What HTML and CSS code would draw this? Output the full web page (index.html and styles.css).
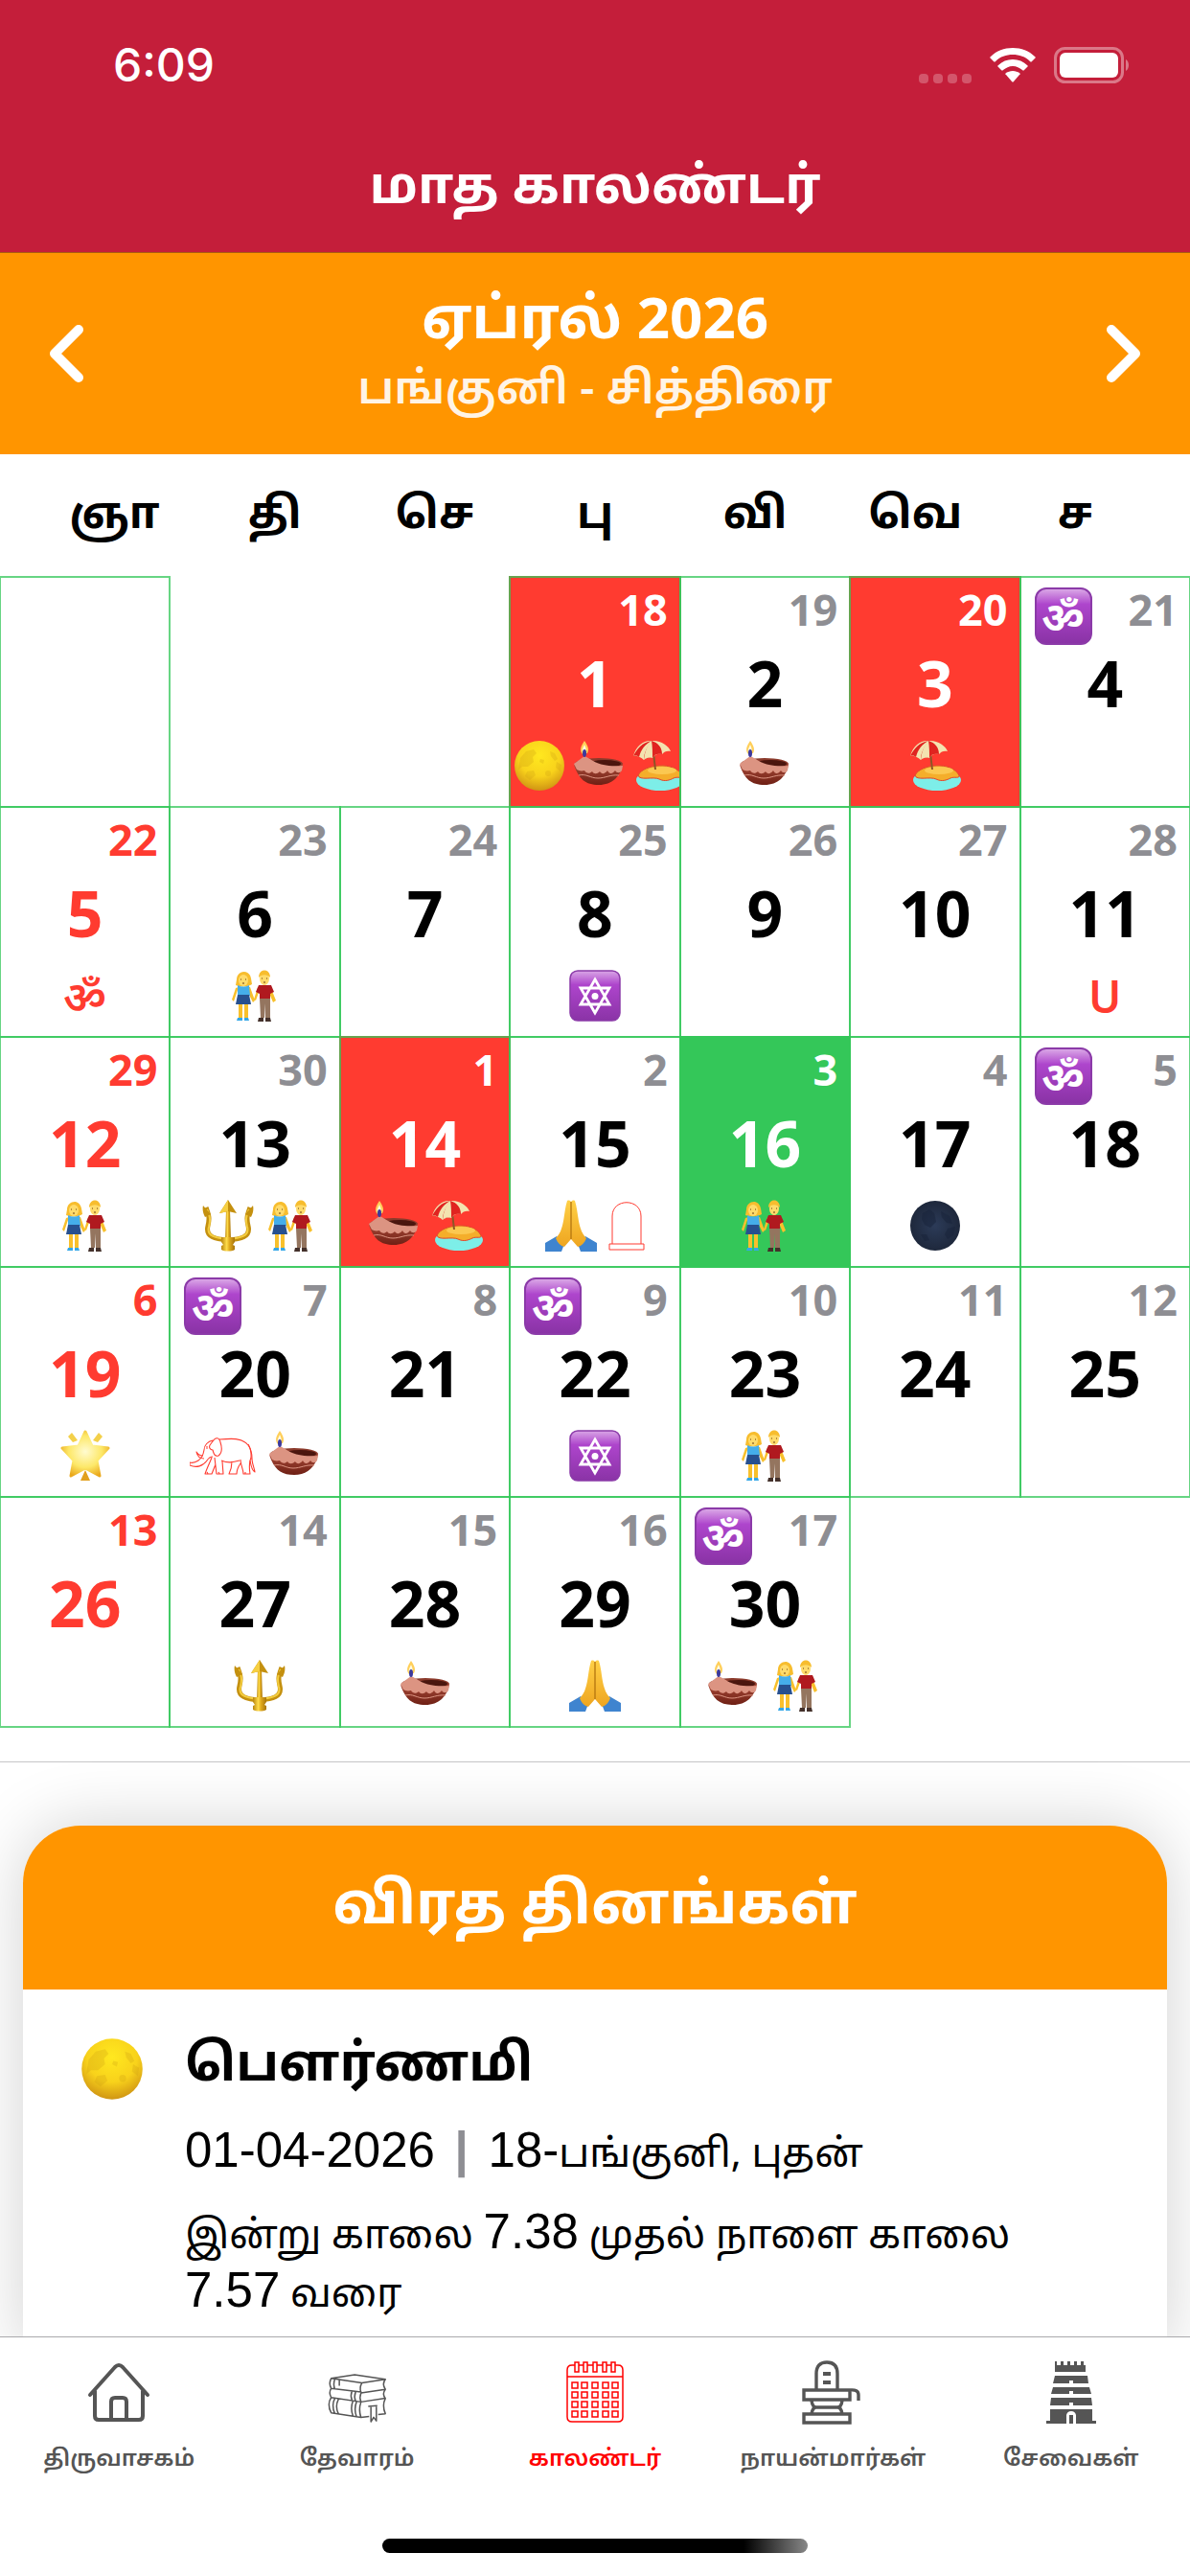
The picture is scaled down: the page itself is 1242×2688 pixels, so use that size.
FILE: index.html
```html
<!DOCTYPE html>
<html lang="ta">
	<head>
		<title>மாத காலண்டர்</title>
		<meta charset="UTF-8">
		<meta content="width=device-width,initial-scale=1.0" name="viewport">
		<link rel="stylesheet" href="styles.css">
	</head>
	<body>
		<svg class="sprite" aria-hidden="true">
			<defs>
				<radialGradient id="gMoon" cx=".5" cy=".3" r=".75">
					<stop offset="0" stop-color="#ffe81f"/><stop offset=".55" stop-color="#f8d21b"/><stop offset="1" stop-color="#c98a12"/>
				</radialGradient>
				<radialGradient id="gDark" cx=".5" cy=".5" r=".6">
					<stop offset="0" stop-color="#2c3b58"/><stop offset="1" stop-color="#1b2436"/>
				</radialGradient>
				<linearGradient id="gPurple" x1="0" y1="0" x2="0" y2="1">
					<stop offset="0" stop-color="#d9a6e6"/><stop offset=".28" stop-color="#ae45cc"/><stop offset="1" stop-color="#8a33a6"/>
				</linearGradient>
				<linearGradient id="gBowl" x1="0" y1="0" x2="0" y2="1">
					<stop offset="0" stop-color="#a84a38"/><stop offset="1" stop-color="#6e1f14"/>
				</linearGradient>
				<linearGradient id="gGold" x1="0" y1="0" x2="1" y2="0">
					<stop offset="0" stop-color="#b9850f"/><stop offset=".4" stop-color="#ffdc4a"/><stop offset=".6" stop-color="#e0aa1d"/><stop offset="1" stop-color="#a8740c"/>
				</linearGradient>
				<linearGradient id="gHand" x1="0" y1="0" x2="0" y2="1">
					<stop offset="0" stop-color="#ffd046"/><stop offset="1" stop-color="#eea520"/>
				</linearGradient>
				<radialGradient id="gStar" cx=".5" cy=".45" r=".6">
					<stop offset="0" stop-color="#fffbd0"/><stop offset=".6" stop-color="#fde868"/><stop offset="1" stop-color="#eaa81c"/>
				</radialGradient>
			</defs>
			<symbol id="moon" viewBox="0 0 54 54">
				<circle cx="27" cy="27" r="26" fill="url(#gMoon)"/>
				<g fill="#c99a12" opacity=".25">
					<path d="M7 19l6-7 8-2 3 4-4 4 1 5-6 5-6 0-4 3z"/>
					<path d="M38 12l5 2 3 6-3 2-4-5zM45 23l5 3-1 7-5-4z"/>
					<path d="M14 33l7-1 2 5-6 5-5-4zM28 20l4 1-1 4-4-2z"/>
					<circle cx="36" cy="35" r="3"/>
				</g>
			</symbol>
			<symbol id="newmoon" viewBox="0 0 54 54">
				<circle cx="27" cy="27" r="26" fill="url(#gDark)"/>
				<g fill="#18233a" opacity=".5">
					<path d="M14 14l7-4 5 4 2 9-6 6-6-3-3-6z"/>
					<path d="M33 12l9 5 3 8-6-1-5-6z"/>
					<path d="M40 30l8-2-2 9-6 4-3-5zM12 36l6 0 3 6-5 1z"/>
				</g>
			</symbol>
			<symbol id="lamp" viewBox="0 0 54 54">
				<ellipse cx="27" cy="25" rx="25" ry="6" fill="#8c3b2c"/>
				<ellipse cx="33" cy="25" rx="17" ry="4" fill="#4b160e"/>
				<path d="M1 26c5 15 12 21 26 21s23-9 25-22c-4 5-36 9-51 1z" fill="url(#gBowl)"/>
				<path d="M1 25l11-8c8 3 13 12 40 10l-1 5c-2 3-5 3-7 0-3 4-6 4-8 0-3 4-6 4-8 1-3 3-6 3-8 0-3 3-6 2-8-1-4 1-6 0-8-1z" fill="#dc9482"/>
				<path d="M6 37c8-2 12 3 20 3s13-4 22-3" fill="none" stroke="#dc9482" stroke-width="1"/>
				<path d="M12 1c4 6 5 9 3 13l-5 1c-4-5-1-9 2-14z" fill="#ffcf5a"/>
				<path d="M12 5c2 4 2 6 1 8h-3c-1-3 1-5 2-8z" fill="#fffbe0"/>
				<ellipse cx="12" cy="14" rx="2" ry="4" fill="#3d3a9c"/>
			</symbol>
			<symbol id="beach" viewBox="0 0 54 54">
				<ellipse cx="29" cy="42" rx="25" ry="11" fill="#7deee8"/>
				<path d="M6 37c6-12 38-15 46 0 1 4-5 1-9 3s-9 4-15 1-21 2-22-4z" fill="#f4ae2b" stroke="#e0462f" stroke-width="1"/>
				<ellipse cx="31" cy="32" rx="15" ry="4" fill="#fbc851"/>
				<path d="M21 5l3 26" stroke="#8d5626" stroke-width="2" fill="none"/>
				<path d="M1 17C4 5 13 0 20 1c9-1 18 5 20 11-3-1-7 0-9 3-4-1-8 0-10 4-4-1-7 0-9 2-3-3-8-5-11-4z" fill="#f3e3b0"/>
				<path d="M20 1C10 3 5 9 1 17c3-1 5 0 6 1C9 10 13 5 20 1zM20 1c-4 6-8 12-8 20 2-2 5-3 9-2 2-4 5-5 10-4C31 8 27 3 20 1z" fill="#e02420"/>
				<path d="M20 1c-5 5-7 12-8 20 2-2 5-3 9-2 0-6 0-12-1-18z" fill="#f3e3b0"/>
			</symbol>
			<symbol id="couple" viewBox="0 0 54 54">
				<path d="M17 18h5l5 14-2 2-5-10zM10 18l-5 15-2-2 4-12zM33 18l-5 14-2-1 4-13zM43 17l6 15-3 2-5-12z" fill="#f8c02c"/>
				<path d="M10 36h4v14h-4zM16 36h4v14h-4z" fill="#f8c02c"/>
				<path d="M8 10c0-9 13-12 15-1l1 6c-4 3-13 3-17 1z" fill="#f7bd2e"/>
				<ellipse cx="15" cy="11" rx="5" ry="6" fill="#ffdb6a"/>
				<path d="M9 16c4 2 8 2 12 0l1 11H9z" fill="#45aeea"/>
				<path d="M9 26h12l2 10H7z" fill="#27508f"/>
				<path d="M9 50h5v3H8zM16 50h4l1 3h-5z" fill="#35a7e8"/>
				<ellipse cx="37" cy="9" rx="5" ry="7" fill="#ffdb6a"/>
				<path d="M31 8c0-10 12-10 12 0-3-3-8-4-12 0z" fill="#f7bd2e"/>
				<path d="M31 16h13l3 7-4 2v5H32v-5l-4-2z" fill="#b0191f"/>
				<path d="M32 30h11v20h-5v-15l-1 15h-4z" fill="#94755f"/>
				<path d="M31 50h5v4h-6zM38 50h5l1 4h-6z" fill="#43302a"/>
				<path d="M12 10h1M17 10h1M34 9h1M39 9h1M14 14h2M36 13h2" stroke="#6b3c12" stroke-width="1.2"/>
			</symbol>
			<symbol id="trident" viewBox="0 0 54 54">
				<path d="M4 8c3 8 4 11 2 19-3 12 8 14 21 15 13-1 24-3 21-15-2-8-1-11 2-19" fill="none" stroke="#c4900f" stroke-width="5"/>
				<path d="M5 10c3 7 4 10 2 18-3 10 8 12 20 13 12-1 23-3 20-13-2-8-1-11 2-18" fill="none" stroke="#f4cd3e" stroke-width="2"/>
				<path d="M25 10h4l1 32h-6z" fill="url(#gGold)"/>
				<path d="M27 0l9 14-9-2-9 2zM1 6l8 9-6 3c-2-4-3-8-2-12zM53 6l-8 9 6 3c2-4 3-8 2-12z" fill="#c4900f"/>
				<path d="M27 0v12l-9 2z" fill="#f6cf42"/>
				<path d="M20 39h14v5l-2 3 2 1v4c-3 2-11 2-14 0v-4l2-1-2-3z" fill="url(#gGold)"/>
			</symbol>
			<symbol id="pray" viewBox="0 0 54 54">
				<path d="M0 45l12-7 8 8-3 8H0zM54 45l-12-7-8 8 3 8h17z" fill="#3f84cf"/>
				<path d="M23 1c2-1 3 0 4 1 1-1 2-2 4-1 3 9 3 21 6 29 1 4 4 8 6 10-2 5-5 8-9 9l-7-8-7 8c-4-1-7-4-9-9 2-2 5-6 6-10 3-8 3-20 6-29z" fill="url(#gHand)"/>
				<path d="M27 2v39" stroke="#b87a12" stroke-width="1.4"/>
			</symbol>
			<symbol id="star" viewBox="0 0 54 54">
				<path d="M27 2l7 15 17 2-12 13 3 16-15-8-15 8 3-16L3 19l17-2z" fill="url(#gStar)" stroke="url(#gStar)" stroke-width="3" stroke-linejoin="round"/>
				<path d="M13 3l6 8-5 2-5-6zM41 3l4 4-5 6-5-2z" fill="#f3d04a"/>
				<path d="M27 42l5 11H22z" fill="#e2a01d"/>
			</symbol>
			<symbol id="hexagram" viewBox="0 0 54 54">
				<rect x="1" y="1" width="52" height="52" rx="8" fill="url(#gPurple)" stroke="#8b3aa8" stroke-width="1.5"/>
				<path d="M27 10l15 26H12zM27 45L12 19h30z" fill="none" stroke="#fff" stroke-width="2.8"/>
				<circle cx="27" cy="27.500" r="3.500" fill="#fff"/>
			</symbol>
			<symbol id="lingam" viewBox="0 0 38 54">
				<path d="M4 46V17C4-2 34-2 34 17v29M1 46h36v6H1z" fill="none" stroke="#ff3b30" stroke-width="1"/>
			</symbol>
			<symbol id="elephant" viewBox="0 0 70 54">
				<g fill="none" stroke="#ff3b30" stroke-width="1.1" stroke-linejoin="round">
					<path d="M31 10c12-1 24-2 30 6 3 4 4 9 4 14 0 6 3 11 3 14-3-1-4-6-5-12"/>
					<path d="M24 12c3-5 7-4 8 1 2 6 2 11-2 14-4 1-5-2-6-6-3 0-4-3-3-5zM24 11c-5 1-9 5-9 10-1 6-3 9-6 11-3 2-6 3-9 2v3c7 3 14 1 18-5 2-3 4-4 6-4"/>
					<path d="M14 27c-3 0-6-2-7-4 1 5 4 7 8 7M23 29c-2 5-5 11-7 17h7l4-10M26 29l2 17h7l-1-13"/>
					<path d="M33 32c7 3 12 2 19 0M44 33c0 5-1 9-3 13h8c0-4 2-8 4-11M53 31c0 6 3 10 3 15h7c-1-6-1-12 1-17M61 15c4 6 3 11 3 16"/>
					<path d="M17 19h2M18 17v1M18 44l1 2M30 44l1 2M58 44v2"/>
				</g>
			</symbol>
		</svg>

		<header class="topbar">
			<div class="status">
				<span class="clock">6:09</span>
				<div class="status-icons">
					<span class="dots"><i></i><i></i><i></i><i></i></span>
					<svg class="wifi" viewBox="0 0 48 36">
						<g fill="#fff">
							<path d="M24 0c9 0 17 3 23 9 1 1 1 1 0 2l-3 3c-1 1-1 1-2 0C37 9 31 7 24 7S11 9 6 14c-1 1-1 1-2 0l-3-3c-1-1-1-1 0-2 6-6 14-9 23-9z"/>
							<path d="M24 12c6 0 11 2 15 6 1 1 1 1 0 2l-3 3c-1 1-1 1-2 0-3-2-6-4-10-4s-7 2-10 4c-1 1-1 1-2 0l-3-3c-1-1-1-1 0-2 4-4 9-6 15-6z"/>
							<path d="M24 24c3 0 5 1 7 2 1 1 1 2 0 2l-6 7c-1 1-1 1-2 0l-6-7c-1 0-1-1 0-2 2-1 4-2 7-2z"/>
						</g>
					</svg>
					<svg class="battery" viewBox="0 0 80 38">
						<rect x="1.5" y="1.5" width="70" height="35" rx="10" fill="none" stroke="#fff" stroke-opacity=".4" stroke-width="3"/>
						<rect x="6" y="6" width="61" height="26" rx="6" fill="#fff"/>
						<path d="M75 13c4 2 4 10 0 12z" fill="#fff" fill-opacity=".4"/>
					</svg>
				</div>
			</div>
			<h1>மாத காலண்டர்</h1>
		</header>

		<section class="month">
			<button type="button" aria-label="Previous month">
				<svg viewBox="0 0 36 60"><path d="M31 5L6 30l25 25"/></svg>
			</button>
			<div class="month-name">
				<h2>ஏப்ரல் 2026</h2>
				<p>பங்குனி - சித்திரை</p>
			</div>
			<button type="button" aria-label="Next month">
				<svg viewBox="0 0 36 60"><path d="M5 5l25 25L5 55"/></svg>
			</button>
		</section>

		<main>
			<table class="calendar">
				<thead>
					<tr><th>ஞா</th><th>தி</th><th>செ</th><th>பு</th><th>வி</th><th>வெ</th><th>ச</th></tr>
				</thead>
				<tbody>
					<tr>
						<td></td>
						<td class="none"></td>
						<td class="none"></td>
						<td class="holiday"><small>18</small><b>1</b><span class="marks three"><svg><use href="#moon"/></svg><svg><use href="#lamp"/></svg><svg><use href="#beach"/></svg></span></td>
						<td><small>19</small><b>2</b><span class="marks"><svg><use href="#lamp"/></svg></span></td>
						<td class="holiday"><small>20</small><b>3</b><span class="marks"><svg><use href="#beach"/></svg></span></td>
						<td><i class="om">ॐ</i><small>21</small><b>4</b></td>
					</tr>
					<tr>
						<td class="sunday"><small>22</small><b>5</b><span class="marks">ॐ</span></td>
						<td><small>23</small><b>6</b><span class="marks"><svg><use href="#couple"/></svg></span></td>
						<td><small>24</small><b>7</b></td>
						<td><small>25</small><b>8</b><span class="marks"><svg><use href="#hexagram"/></svg></span></td>
						<td><small>26</small><b>9</b></td>
						<td><small>27</small><b>10</b></td>
						<td><small>28</small><b>11</b><span class="marks">U</span></td>
					</tr>
					<tr>
						<td class="sunday"><small>29</small><b>12</b><span class="marks"><svg><use href="#couple"/></svg></span></td>
						<td><small>30</small><b>13</b><span class="marks lead"><svg><use href="#trident"/></svg><svg><use href="#couple"/></svg></span></td>
						<td class="holiday"><small>1</small><b>14</b><span class="marks"><svg><use href="#lamp"/></svg><svg><use href="#beach"/></svg></span></td>
						<td><small>2</small><b>15</b><span class="marks"><svg><use href="#pray"/></svg><svg class="narrow"><use href="#lingam"/></svg></span></td>
						<td class="today"><small>3</small><b>16</b><span class="marks"><svg><use href="#couple"/></svg></span></td>
						<td><small>4</small><b>17</b><span class="marks"><svg><use href="#newmoon"/></svg></span></td>
						<td><i class="om">ॐ</i><small>5</small><b>18</b></td>
					</tr>
					<tr>
						<td class="sunday"><small>6</small><b>19</b><span class="marks"><svg><use href="#star"/></svg></span></td>
						<td><i class="om">ॐ</i><small>7</small><b>20</b><span class="marks"><svg class="wide"><use href="#elephant"/></svg><svg><use href="#lamp"/></svg></span></td>
						<td><small>8</small><b>21</b></td>
						<td><i class="om">ॐ</i><small>9</small><b>22</b><span class="marks"><svg><use href="#hexagram"/></svg></span></td>
						<td><small>10</small><b>23</b><span class="marks"><svg><use href="#couple"/></svg></span></td>
						<td><small>11</small><b>24</b></td>
						<td><small>12</small><b>25</b></td>
					</tr>
					<tr>
						<td class="sunday"><small>13</small><b>26</b></td>
						<td><small>14</small><b>27</b><span class="marks lead"><svg><use href="#trident"/></svg></span></td>
						<td><small>15</small><b>28</b><span class="marks"><svg><use href="#lamp"/></svg></span></td>
						<td><small>16</small><b>29</b><span class="marks"><svg><use href="#pray"/></svg></span></td>
						<td><i class="om">ॐ</i><small>17</small><b>30</b><span class="marks"><svg><use href="#lamp"/></svg><svg><use href="#couple"/></svg></span></td>
					</tr>
				</tbody>
			</table>

			<hr>

			<section class="card">
				<h2>விரத தினங்கள்</h2>
				<article>
					<svg class="big-moon"><use href="#moon"/></svg>
					<div>
						<h3>பௌர்ணமி</h3>
						<p class="date"><span class="num">01-04-2026</span> <span class="num bar">|</span> <span class="num">18-</span>பங்குனி, புதன்</p>
						<p>இன்று காலை <span class="num">7.38</span> முதல் நாளை காலை <span class="num">7.57</span> வரை</p>
					</div>
				</article>
			</section>
		</main>

		<nav class="tabs">
			<a href="#">
				<svg viewBox="0 0 66 66" fill="none" stroke="currentColor" stroke-width="4" stroke-linejoin="round" stroke-linecap="round">
					<path d="M3 36L29 7q4-4 8 0l26 29M8 32v26q0 4 4 4h42q4 0 4-4V32M25 61V43q0-4 4-4h8q4 0 4 4v18"/>
				</svg>
				<span>திருவாசகம்</span>
			</a>
			<a href="#">
				<svg viewBox="0 4 66 70" fill="none" stroke="currentColor" stroke-width="1.6" stroke-linejoin="round">
					<path d="M4 24l26-4 34 5-26 4zM4 24q-3 5 0 11l33 4q-2-5 1-10M8 25q-2 5 0 11M13 26v6M64 25q-4 5 0 11l-27 4M4 35q-3 5 0 10l33 5q-2-5 0-10M27 38q-2 5 0 10M31 39q-2 5 0 10M64 36q-4 5 0 10l-27 4M4 45q-5 8 0 17l33 5q-3-8 0-17M8 46q-4 8 0 17M12 47q-4 8 0 16M28 49q-3 8 0 16M32 50q-3 8 0 16M64 46q-4 8 0 17l-8 1M37 67l9-1M45 55l10-1M48 55v17l3-5 3 4V54"/>
				</svg>
				<span>தேவாரம்</span>
			</a>
			<a href="#" class="active">
				<svg viewBox="0 0 66 66" fill="none" stroke="currentColor" stroke-width="1.5">
					<path d="M12 5H9q-5 0-5 5v49q0 5 5 5h48q5 0 5-5V10q0-5-5-5h-3M16 5h5M25 5h6M35 5h6M45 5h5M4 17h58"/>
					<path d="M12 2h4v10h-4zM21 2h4v10h-4zM31 2h4v10h-4zM41 2h4v10h-4zM50 2h4v10h-4z"/>
					<path d="M9 23h6v6H9zM19 23h6v6h-6zM30 23h6v6h-6zM41 23h6v6h-6zM51 23h6v6h-6zM9 33h6v6H9zM19 33h6v6h-6zM30 33h6v6h-6zM41 33h6v6h-6zM51 33h6v6h-6zM9 43h6v6H9zM19 43h6v6h-6zM30 43h6v6h-6zM41 43h6v6h-6zM51 43h6v6h-6zM9 53h6v6H9zM19 53h6v6h-6zM30 53h6v6h-6zM41 53h6v6h-6zM51 53h6v6h-6z"/>
				</svg>
				<span>காலண்டர்</span>
			</a>
			<a href="#">
				<svg viewBox="0 0 66 66" fill="none" stroke="currentColor" stroke-width="3.4">
					<path d="M16 30V14q0-12 11-12t11 12v16M3 31h48v10H3zM51 31q9-1 9 5v6M11 42q1 7 5 7h22q4 0 5-7M11 56q1-7 5-7h22q4 0 5 7M3 56h48v9H3z"/>
					<path d="M23 14h8M23 23h8" stroke-width="4"/>
				</svg>
				<span>நாயன்மார்கள்</span>
			</a>
			<a href="#">
				<svg viewBox="0 0 66 66" fill="currentColor">
					<path d="M16 1h2v4h4V1h3v4h4V1h3v4h4V1h3v4h4V1h3v4h2v7H16zM16 16h34l1 8H35v-3h-4v3H14zM14 28h38l2 7H35v-3h-4v3H12zM12 39h42l1 8H35v-3h-4v3H11zM11 51h44v12h4v3H38V57q-1-4-5-4t-5 4v9H7v-3h4zM31 57h4v9h-4z"/>
				</svg>
				<span>சேவைகள்</span>
			</a>
		</nav>
		<div class="home-bar"></div>
	</body>
</html>
```
FILE: styles.css
```css
*{box-sizing:border-box;margin:0;padding:0;}
body{height:100vh;display:flex;flex-direction:column;overflow:hidden;background:#fff;color:#000;font-family:"Noto Sans","Noto Sans Tamil","Noto Sans Devanagari",sans-serif;}
.sprite{position:absolute;width:0;height:0;}

.topbar{height:264px;flex:none;background:#c41e3a;color:#fff;border-bottom:1px solid #a95a10;}
.status{height:136px;padding:0 62px 0 118px;display:flex;align-items:center;justify-content:space-between;}
.clock{font:500 48px/60px Inter,sans-serif;}
.status-icons{display:flex;align-items:center;gap:19px;}
.dots{display:flex;gap:5px;align-self:flex-end;}
.dots i{width:10px;height:10px;border-radius:4px;background:rgba(255,255,255,.25);}
.wifi{width:48px;height:36px;}
.battery{width:80px;height:38px;}
h1{font-size:54px;line-height:110px;text-align:center;}

.month{height:210px;flex:none;display:flex;align-items:center;justify-content:space-between;padding:0 50px;background:#ff9500;color:#fff;text-align:center;}
.month button{border:0;background:none;}
.month svg{display:block;width:38px;height:60px;fill:none;stroke:#fff;stroke-width:10px;stroke-linecap:round;stroke-linejoin:round;}
.month-name{padding-bottom:12px;}
.month h2{font-size:60px;line-height:80px;}
.month p{font-size:47px;line-height:66px;font-weight:600;opacity:.9;}

main{flex:1;min-height:0;display:flex;flex-direction:column;overflow:hidden;}
.calendar,.calendar thead,.calendar tbody{display:block;}
.calendar tr{display:grid;grid-template-columns:repeat(7,1fr);}
.calendar thead tr{height:128px;padding:0 36px;}
.calendar th{font-size:46px;line-height:118px;}
.calendar td{position:relative;height:242px;margin:-1px;border:2px solid rgba(52,199,89,.75);overflow:hidden;text-align:center;}
.calendar tbody tr{height:240px;}
.calendar td.none{border:0;}
.calendar small{display:block;padding:8px 12px 0;font-size:45px;line-height:50px;font-weight:bold;text-align:right;color:#8e8e93;}
.calendar b{display:block;font-size:66px;line-height:102px;}
.calendar td.sunday,.calendar td.sunday small{color:#ff3b30;}
.calendar td.holiday{background:#ff3b30;}
.calendar td.today{background:#34c759;}
.calendar td.holiday,.calendar td.today,.calendar .holiday small,.calendar .today small{color:#fff;}
.marks{display:flex;justify-content:center;align-items:center;gap:12px;height:72px;font-size:46px;font-weight:600;color:#ff3b30;}
.marks svg{flex:none;width:54px;height:54px;}
.marks svg.narrow{width:38px;}
.marks svg.wide{width:70px;}
.marks.lead{padding-left:10px;}
.marks.three{justify-content:flex-start;gap:8px;padding-left:3px;}
.om{position:absolute;left:14px;top:10px;width:60px;height:60px;border:2px solid #8b3aa8;border-radius:12px;background:linear-gradient(#d9a6e6,#ae45cc 28%,#8a33a6);color:#fff;font-size:44px;font-weight:bold;font-style:normal;line-height:56px;}

hr{margin-top:36px;border:0;border-top:1px solid #c6c6c8;flex:none;}
.card{flex:1;margin:66px 24px 0;border-radius:60px 60px 0 0;box-shadow:0 0 70px rgba(0,0,0,.18);background:#fff;}
.card h2{height:171px;border-radius:60px 60px 0 0;background:#ff9500;color:#fff;font-size:60px;line-height:158px;text-align:center;}
.card article{display:flex;gap:43px;padding:36px 60px;}
.card h3{font-size:54px;line-height:76px;}
.card p{font:41px/60px "Noto Sans","Noto Sans Tamil",sans-serif;}
.card .date{margin:26px 0 24px;}
.num{font:51px/60px "Liberation Sans",sans-serif;}
.num.bar{color:#8e8e93;font-weight:bold;margin:0 10px;}
.big-moon{width:66px;height:66px;margin-top:14px;flex:none;}

.tabs{flex:none;display:grid;grid-template-columns:repeat(5,1fr);padding-top:24px;border-top:1px solid #a9a9ac;background:#fff;}
.tabs a{display:flex;flex-direction:column;align-items:center;color:#555;text-decoration:none;font-size:24px;line-height:70px;font-weight:600;}
.tabs a.active{color:red;}
.tabs svg{width:66px;height:66px;overflow:visible;}
.home-bar{flex:none;width:444px;height:15px;margin:50px auto 24px;border-radius:8px;background:linear-gradient(90deg,#000 85%,#888);}
```
